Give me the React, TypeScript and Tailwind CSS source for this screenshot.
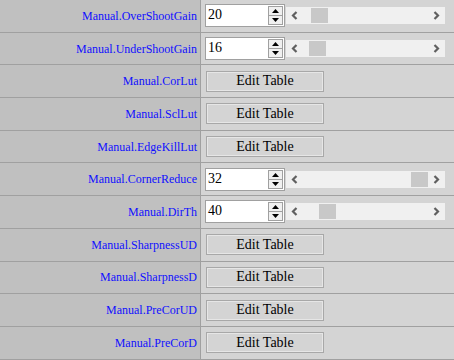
import React from 'react';

type Row =
  | { label: string; kind: 'num'; value: number; thumb: number }
  | { label: string; kind: 'table' };

const rows: Row[] = [
  { label: 'Manual.OverShootGain', kind: 'num', value: 20, thumb: 311 },
  { label: 'Manual.UnderShootGain', kind: 'num', value: 16, thumb: 309 },
  { label: 'Manual.CorLut', kind: 'table' },
  { label: 'Manual.SclLut', kind: 'table' },
  { label: 'Manual.EdgeKillLut', kind: 'table' },
  { label: 'Manual.CornerReduce', kind: 'num', value: 32, thumb: 411 },
  { label: 'Manual.DirTh', kind: 'num', value: 40, thumb: 319 },
  { label: 'Manual.SharpnessUD', kind: 'table' },
  { label: 'Manual.SharpnessD', kind: 'table' },
  { label: 'Manual.PreCorUD', kind: 'table' },
  { label: 'Manual.PreCorD', kind: 'table' },
];

function NumberField({ value }: { value: number }) {
  return (
    <div className="flex h-[23px] w-[80px] items-stretch border border-[#a0a0a0] bg-white">
      <span className="flex-1 pl-[2px] text-[14px] leading-[19px] text-black">{value}</span>
      <div className="my-[1px] mr-[1px] flex w-[15px] flex-col border border-[#a0a0a0] bg-[#f0f0f0]">
        <div className="flex flex-1 items-center justify-center border-b border-[#a0a0a0]">
          <svg width="7" height="4" viewBox="0 0 7 4">
            <polygon points="0,4 7,4 3.5,0" fill="#000" />
          </svg>
        </div>
        <div className="flex flex-1 items-center justify-center">
          <svg width="7" height="4" viewBox="0 0 7 4">
            <polygon points="0,0 7,0 3.5,4" fill="#000" />
          </svg>
        </div>
      </div>
    </div>
  );
}

function Slider({ thumb }: { thumb: number }) {
  // thumb is the page x of the thumb's left edge; track starts at x=286
  return (
    <div className="relative ml-[1px] h-[17px] w-[159px] bg-[#f0f0f0]">
      <svg className="absolute left-[5px] top-[4px]" width="7" height="9" viewBox="0 0 7 9">
        <polyline points="5.5,1 2,4.5 5.5,8" fill="none" stroke="#606060" strokeWidth="2.2" />
      </svg>
      <div
        className="absolute top-[1px] h-[15px] w-[17px] bg-[#c8c8c8]"
        style={{ left: thumb - 286 }}
      />
      <svg className="absolute right-[5px] top-[4px]" width="7" height="9" viewBox="0 0 7 9">
        <polyline points="1.5,1 5,4.5 1.5,8" fill="none" stroke="#606060" strokeWidth="2.2" />
      </svg>
    </div>
  );
}

function EditButton() {
  return (
    <div className="ml-[1px] flex h-[21px] w-[118px] items-center justify-center border border-[#a8a8a8] bg-[#d4d4d4] shadow-[inset_0_0_0_1px_#e6e6e6]">
      <span className="text-[14px] leading-none text-black">Edit Table</span>
    </div>
  );
}

export default function App() {
  return (
    <div
      className="h-[360px] w-[454px] overflow-hidden bg-[#d4d4d4]"
      style={{ fontFamily: '"Liberation Serif", "Times New Roman", serif' }}
    >
      {rows.map((r) => (
        <div key={r.label} className="flex h-[32.7px] border-b border-[#a0a0a0]">
          <div className="flex w-[201px] items-center justify-end border-r border-[#a0a0a0] bg-[#c0c0c0] pr-[3px]">
            <span className="text-[12px] text-[#1010ff]">{r.label}</span>
          </div>
          <div className="flex flex-1 items-center pl-[4px]">
            {r.kind === 'num' ? (
              <>
                <NumberField value={r.value} />
                <Slider thumb={r.thumb} />
              </>
            ) : (
              <EditButton />
            )}
          </div>
        </div>
      ))}
    </div>
  );
}
